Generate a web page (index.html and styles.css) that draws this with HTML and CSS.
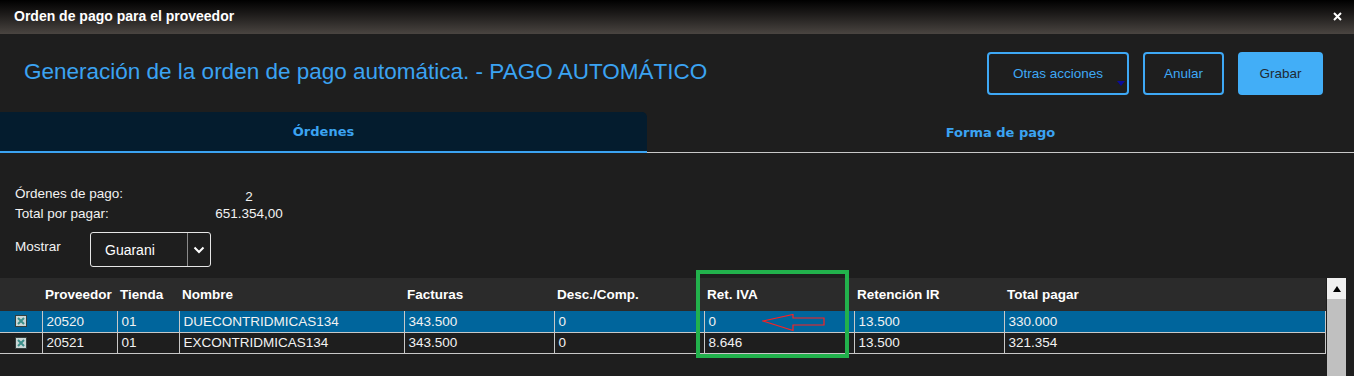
FILE: index.html
```html
<!DOCTYPE html>
<html lang="es">
<head>
    <meta charset="UTF-8">
    <title>Orden de pago para el proveedor</title>
    <link rel="stylesheet" href="styles.css">
</head>
<body>
    <header class="titlebar">
        <span class="title">Orden de pago para el proveedor</span>
        <svg class="close" width="9" height="9" viewBox="0 0 9 9"><path d="M1 1 L8 8 M8 1 L1 8" stroke="#fff" stroke-width="2"/></svg>
    </header>

    <div class="toolbar">
        <h1>Generación de la orden de pago automática. - PAGO AUTOMÁTICO</h1>
        <div class="actions">
            <button class="btn btn-more">Otras acciones<span class="caret"></span></button>
            <button class="btn btn-anular">Anular</button>
            <button class="btn btn-primary">Grabar</button>
        </div>
    </div>

    <nav class="tabs">
        <div class="tab active">Órdenes</div>
        <div class="tab">Forma de pago</div>
    </nav>

    <section class="summary">
        <div class="info-row">
            <span class="info-label">Órdenes de pago:</span>
            <span class="info-value low">2</span>
        </div>
        <div class="info-row">
            <span class="info-label">Total por pagar:</span>
            <span class="info-value">651.354,00</span>
        </div>
        <div class="show-row">
            <span class="show-label">Mostrar</span>
            <div class="select">
                <span class="select-text">Guarani</span>
                <span class="select-arrow">
                    <svg width="12" height="8" viewBox="0 0 12 8"><path d="M1.5 1.5 L6 6 L10.5 1.5" fill="none" stroke="#fff" stroke-width="2"/></svg>
                </span>
            </div>
        </div>
    </section>

    <div class="grid-wrap">
        <div class="grid">
            <table>
                <colgroup>
                    <col style="width:42px"><col style="width:75px"><col style="width:62px"><col style="width:225px">
                    <col style="width:150px"><col style="width:150px"><col style="width:150px"><col style="width:150px"><col>
                </colgroup>
                <thead>
                    <tr>
                        <th></th><th>Proveedor</th><th>Tienda</th><th>Nombre</th><th>Facturas</th>
                        <th>Desc./Comp.</th><th>Ret. IVA</th><th>Retención IR</th><th>Total pagar</th>
                    </tr>
                </thead>
                <tbody>
                    <tr class="selected">
                        <td class="chk"><svg width="12" height="12" viewBox="0 0 12 12"><rect x="0.5" y="0.5" width="11" height="11" fill="#c9d7d7" stroke="#34403f"/><path d="M3 3 L9 9 M9 3 L3 9" stroke="#3b8f8b" stroke-width="2"/></svg></td>
                        <td>20520</td><td>01</td><td>DUECONTRIDMICAS134</td><td>343.500</td><td>0</td><td>0</td><td>13.500</td><td>330.000</td>
                    </tr>
                    <tr>
                        <td class="chk"><svg width="12" height="12" viewBox="0 0 12 12"><rect x="0.5" y="0.5" width="11" height="11" fill="#c9d7d7" stroke="#34403f"/><path d="M3 3 L9 9 M9 3 L3 9" stroke="#3b8f8b" stroke-width="2"/></svg></td>
                        <td>20521</td><td>01</td><td>EXCONTRIDMICAS134</td><td>343.500</td><td>0</td><td>8.646</td><td>13.500</td><td>321.354</td>
                    </tr>
                </tbody>
            </table>
            <div class="highlight"></div>
            <svg class="arrow" width="64" height="18" viewBox="0 0 64 18">
                <path d="M1 7 L31 0.5 L31 4 L62 4 L62 11 L31 11 L31 16.5 Z" fill="none" stroke="#ff2020" stroke-width="1.2"/>
            </svg>
        </div>
        <div class="scrollbar">
            <div class="scroll-up"><span></span></div>
        </div>
    </div>
</body>
</html>
```

FILE: styles.css
```css
/* Global Styles */
body {
    margin: 0;
    padding: 0;
    background: #1e1e1e;
    font-family: 'Liberation Sans', Arial, sans-serif;
    color: #fff;
    overflow: hidden;
}

/* Title bar */
.titlebar {
    height: 34px;
    display: flex;
    align-items: center;
    justify-content: space-between;
    padding: 0 12px 0 14px;
    background: linear-gradient(to bottom, #000 0%, #1c1a19 40%, #4a4541 100%);
}
.title {
    font-size: 14px;
    font-weight: bold;
    color: #fff;
    margin-top: -2px;
}
.close {
    margin-top: -2px;
}

/* Toolbar */
.toolbar {
    height: 78px;
    display: flex;
    align-items: center;
    justify-content: space-between;
    padding: 0 31px 0 24px;
}
.toolbar h1 {
    margin: 0 0 3px 0;
    font-size: 22.5px;
    font-weight: normal;
    color: #3ba3f2;
}
.actions {
    display: flex;
    gap: 14px;
    margin-top: 1px;
}
.btn {
    position: relative;
    height: 43px;
    border: 2px solid #3ea8f5;
    border-radius: 4px;
    background: transparent;
    color: #3ea8f5;
    font-family: 'Liberation Sans', Arial, sans-serif;
    font-size: 13.5px;
    padding: 0;
}
.btn-more { width: 142px; }
.btn-anular { width: 81px; }
.btn-primary {
    width: 85px;
    background: #42aef7;
    border-color: #42aef7;
    color: #1f2a33;
}
.caret {
    position: absolute;
    right: 2px;
    bottom: 7px;
    width: 0;
    height: 0;
    border-left: 4px solid transparent;
    border-right: 4px solid transparent;
    border-top: 5px solid #0b0b9a;
}

/* Tabs */
.tabs {
    display: flex;
    height: 41px;
}
.tab {
    flex: 1;
    display: flex;
    align-items: center;
    justify-content: center;
    font-family: 'DejaVu Sans', Verdana, sans-serif;
    font-size: 13px;
    font-weight: bold;
    color: #3ba3f2;
    border-bottom: 1px solid #c8c8c8;
}
.tab.active {
    flex: 0 0 647px;
    background: #041c2e;
    border-top-right-radius: 5px;
    border-bottom: 2px solid #3ba3f2;
}

/* Summary */
.summary {
    padding: 30px 0 0 15px;
    font-size: 13.5px;
    color: #f2f2f2;
}
.info-row {
    display: flex;
    height: 20px;
    align-items: center;
}
.info-label {
    width: 165px;
}
.info-value {
    width: 138px;
    text-align: center;
}
.info-value.low {
    margin-top: 7px;
}
.show-row {
    display: flex;
    align-items: flex-start;
    margin-top: 9px;
}
.show-label {
    width: 75px;
    padding-top: 7px;
}
.select {
    width: 119px;
    height: 33px;
    display: flex;
    border: 1.5px solid #e6e6e6;
    border-radius: 3px;
}
.select-text {
    flex: 1;
    display: flex;
    align-items: center;
    padding-left: 14px;
    font-size: 14px;
    color: #fff;
}
.select-arrow {
    width: 22px;
    display: flex;
    align-items: center;
    justify-content: center;
    border-left: 1px solid #8a8a8a;
}

/* Grid */
.grid-wrap {
    display: flex;
    margin-top: 11px;
}
.grid {
    position: relative;
    width: 1326px;
}
table {
    width: 1326px;
    table-layout: fixed;
    border-collapse: collapse;
    font-size: 13.5px;
}
thead tr {
    height: 33px;
    background: #2b2b2b;
}
th {
    text-align: left;
    font-weight: bold;
    color: #fff;
    padding: 0 0 0 3px;
    white-space: nowrap;
}
tbody tr {
    height: 21px;
}
td {
    padding: 0 0 0 4px;
    color: #f2f2f2;
    border-left: 1px solid #c8c8c8;
    border-bottom: 1px solid #c8c8c8;
    white-space: nowrap;
}
td:last-child {
    border-right: 1px solid #c8c8c8;
}
td.chk {
    border-left: none;
    padding: 0;
    text-align: center;
    line-height: 0;
}
td.chk svg {
    margin-left: 1px;
}
tr.selected {
    background: #00659c;
}

/* Annotations drawn over the grid */
.highlight {
    position: absolute;
    left: 696px;
    top: -8px;
    width: 145px;
    height: 80px;
    border: 4px solid #22b14c;
}
.arrow {
    position: absolute;
    left: 762px;
    top: 36px;
}

/* Scrollbar */
.scrollbar {
    width: 19px;
    height: 100px;
    margin-left: 1px;
    background: #c0c0c0;
}
.scroll-up {
    height: 21px;
    background: #f0f0f0;
    display: flex;
    align-items: center;
    justify-content: center;
}
.scroll-up span {
    width: 0;
    height: 0;
    border-left: 4px solid transparent;
    border-right: 4px solid transparent;
    border-bottom: 6px solid #000;
}
```
